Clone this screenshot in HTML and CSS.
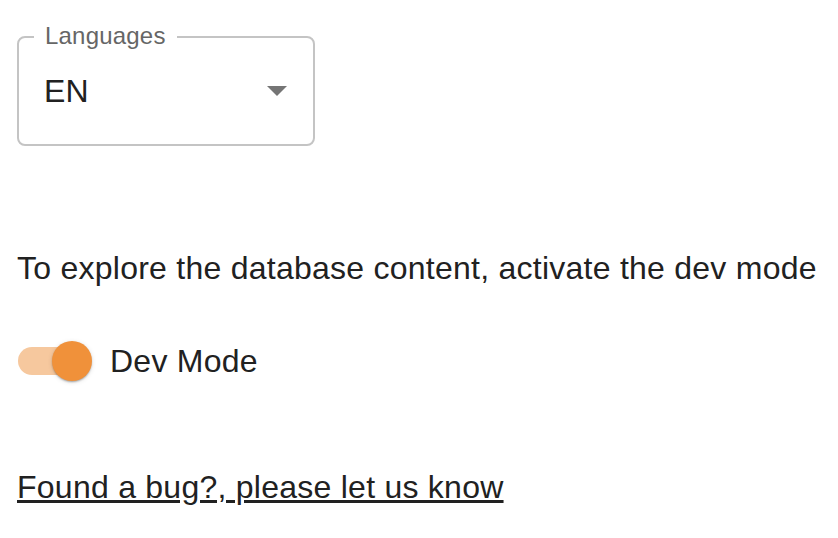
FILE: index.html
```html
<!DOCTYPE html>
<html>
<head>
<meta charset="utf-8">
<link rel="stylesheet" href="styles.css">
</head>
<body>
<div class="page">
  <div class="select">
    <span class="select-label">Languages</span>
    <span class="select-value">EN</span>
    <svg class="select-arrow" viewBox="0 0 20 10" width="20" height="10"><path d="M0 0l10 10 10-10z" fill="#757575"/></svg>
  </div>
  <p class="info">To explore the database content, activate the dev mode</p>
  <div class="switch-row">
    <span class="switch"><span class="track"></span><span class="thumb"></span></span>
    <span class="switch-text">Dev Mode</span>
  </div>
  <a class="bug-link" href="#">Found a bug?, please let us know</a>
</div>
</body>
</html>
```
FILE: styles.css
```css
html, body {
  margin: 0;
  padding: 0;
  background: #fff;
}
.page {
  font-family: "Liberation Sans", Arial, Helvetica, sans-serif;
  color: #212121;
  padding: 36px 0 0 17px;
  display: flex;
  flex-direction: column;
  align-items: flex-start;
  letter-spacing: 0.25px;
}
.select {
  position: relative;
  box-sizing: border-box;
  width: 298px;
  height: 110px;
  border: 2px solid #c4c4c4;
  border-radius: 8px;
  display: flex;
  align-items: center;
  padding: 0 26px 0 25px;
}
.select-label {
  position: absolute;
  left: 15px;
  top: -19px;
  padding: 0 11px;
  background: #fff;
  font-size: 24px;
  line-height: 34px;
  color: #666;
  letter-spacing: 0.2px;
}
.select-value {
  font-size: 32px;
  line-height: 48px;
  flex: 1;
}
.select-arrow {
  display: block;
}
.info {
  margin: 98px 0 0 0;
  font-size: 32px;
  line-height: 48px;
}
.switch-row {
  margin-top: 45px;
  display: flex;
  align-items: center;
  gap: 18px;
}
.switch {
  position: relative;
  width: 75px;
  height: 40px;
  display: block;
}
.track {
  position: absolute;
  left: 1px;
  top: 6px;
  width: 68px;
  height: 28px;
  border-radius: 14px;
  background: #f6c89e;
}
.thumb {
  position: absolute;
  left: 35px;
  top: 0;
  width: 40px;
  height: 40px;
  border-radius: 50%;
  background: #f0913a;
  box-shadow: 0 2px 2px -1px rgba(0,0,0,0.2), 0 1px 2px 0 rgba(0,0,0,0.14), 0 1px 5px 0 rgba(0,0,0,0.12);
}
.switch-text {
  font-size: 32px;
  line-height: 48px;
}
.bug-link {
  margin-top: 78px;
  font-size: 32px;
  line-height: 48px;
  color: #212121;
  text-decoration: underline;
}
```
